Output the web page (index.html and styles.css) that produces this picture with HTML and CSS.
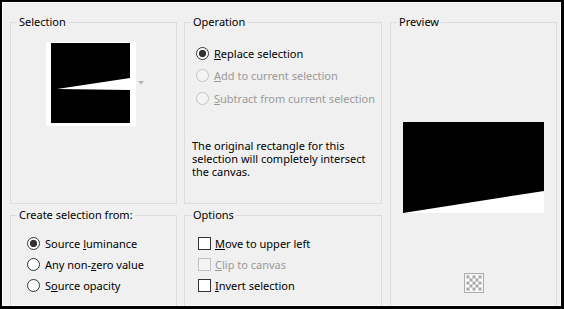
FILE: index.html
```html
<!DOCTYPE html>
<html lang="en">
<head>
    <meta charset="UTF-8">
    <title>Selection from Mask</title>
    <link rel="stylesheet" href="styles.css">
</head>
<body>

<div class="window">
    <!-- Source thumbnail -->
    <fieldset class="group group-selection">
        <legend>Selection</legend>
        <div class="thumb-row">
            <svg class="thumb" width="90" height="84" viewBox="0 0 90 84">
                <rect width="90" height="84" fill="#fff"/>
                <rect x="5" y="1" width="79" height="80" fill="#000"/>
                <polygon points="11,47 84,36 84,48" fill="#fff"/>
            </svg>
            <svg class="thumb-arrow" width="6" height="4" viewBox="0 0 6 4">
                <polygon points="0,0 6,0 3,3.5" fill="#b4b4b4"/>
            </svg>
        </div>
    </fieldset>

    <fieldset class="group group-operation">
        <legend>Operation</legend>
        <div class="options options-wide">
            <label class="option"><input type="radio" name="op" checked><span><u>R</u>eplace selection</span></label>
            <label class="option is-disabled"><input type="radio" name="op" disabled><span><u>A</u>dd to current selection</span></label>
            <label class="option is-disabled"><input type="radio" name="op" disabled><span><u>S</u>ubtract from current selection</span></label>
        </div>
        <p class="note">The original rectangle for this selection will completely intersect the canvas.</p>
    </fieldset>

    <fieldset class="group group-preview">
        <legend>Preview</legend>
        <div class="preview-body">
            <svg class="preview-img" width="141" height="91" viewBox="0 0 141 91">
                <rect width="141" height="91" fill="#000"/>
                <polygon points="0,91 141,69 141,91" fill="#fff"/>
            </svg>
            <!-- transparency toggle -->
            <svg class="checker" width="20" height="20" viewBox="0 0 20 20">
                <rect x="0.5" y="0.5" width="19" height="19" fill="#f4f4f4" stroke="#adadad"/>
                <rect x="2.5" y="2.5" width="15" height="15" fill="#fff"/>
                <g fill="#a8a8a8">
                    <rect x="2.5" y="2.5" width="3" height="3"/><rect x="8.5" y="2.5" width="3" height="3"/><rect x="14.5" y="2.5" width="3" height="3"/>
                    <rect x="5.5" y="5.5" width="3" height="3"/><rect x="11.5" y="5.5" width="3" height="3"/>
                    <rect x="2.5" y="8.5" width="3" height="3"/><rect x="8.5" y="8.5" width="3" height="3"/><rect x="14.5" y="8.5" width="3" height="3"/>
                    <rect x="5.5" y="11.5" width="3" height="3"/><rect x="11.5" y="11.5" width="3" height="3"/>
                    <rect x="2.5" y="14.5" width="3" height="3"/><rect x="8.5" y="14.5" width="3" height="3"/><rect x="14.5" y="14.5" width="3" height="3"/>
                </g>
            </svg>
        </div>
    </fieldset>

    <fieldset class="group group-source">
        <legend>Create selection from:</legend>
        <div class="options options-narrow">
            <label class="option"><input type="radio" name="src" checked><span>Source <u>l</u>uminance</span></label>
            <label class="option"><input type="radio" name="src"><span>Any non-<u>z</u>ero value</span></label>
            <label class="option"><input type="radio" name="src"><span>S<u>o</u>urce opacity</span></label>
        </div>
    </fieldset>

    <fieldset class="group group-flags">
        <legend>Options</legend>
        <div class="options options-narrow options-checks">
            <label class="option"><input type="checkbox"><span><u>M</u>ove to upper left</span></label>
            <label class="option is-disabled"><input type="checkbox" disabled><span><u>C</u>lip to canvas</span></label>
            <label class="option"><input type="checkbox"><span><u>I</u>nvert selection</span></label>
        </div>
    </fieldset>
</div>

</body>
</html>
```
FILE: styles.css
```css
body {
    margin: 0;
    font-family: "Noto Sans", "Open Sans", sans-serif;
    font-size: 11px;
    color: #000;
    background: #000;
}
.window {
    box-sizing: border-box;
    width: 564px;
    height: 309px;
    border: solid #000;
    border-width: 2px 3px 3px 2px;
    background-color: #f0f0f0;
    box-shadow: inset 1px 1px 0 #fff, inset -1px -1px 0 #fff;
    padding: 12px 0 0 8px;
    overflow: hidden;
    display: grid;
    grid-template-columns: 167px 198px 168px;
    grid-template-rows: 190px 110px;
    column-gap: 7px;
    row-gap: 3px;
}
.group {
    margin: 0;
    padding: 0;
    min-width: 0;
    border: 1px solid #dcdcdc;
}
.group legend {
    margin-left: 6px;
    padding: 0 2px;
    line-height: 16px;
}
.group-selection { grid-column: 1; grid-row: 1; }
.group-operation { grid-column: 2; grid-row: 1; }
.group-source    { grid-column: 1; grid-row: 2; }
.group-flags     { grid-column: 2; grid-row: 2; }
.group-preview {
    grid-column: 3;
    grid-row: 1 / 3;
    margin-left: 1px;
}

/* thumbnail */
.thumb-row {
    display: flex;
    align-items: center;
    padding: 12px 0 0 35px;
}
.thumb, .thumb-arrow, .preview-img, .checker {
    display: block;
}
.thumb-arrow {
    margin: 0 0 2px 2px;
}

/* radios and checkboxes */
.options {
    display: flex;
    flex-direction: column;
}
.options-wide {
    padding: 12px 0 0 11px;
}
.options-wide .option {
    height: 22.5px;
}
.options-narrow {
    padding: 9.5px 0 0 16px;
}
.options-narrow .option {
    height: 21px;
}
.options-checks {
    padding-left: 13px;
}
.option {
    display: flex;
    align-items: center;
    white-space: nowrap;
}
.option span {
    line-height: 15px;
}
.option input {
    appearance: none;
    box-sizing: border-box;
    width: 13px;
    height: 13px;
    margin: 0 5px 0 0;
    border: 1px solid #333;
    background-color: #fff;
    flex-shrink: 0;
}
.option input[type="radio"] {
    border-radius: 50%;
}
.option input[type="radio"]:checked {
    background: radial-gradient(circle, #333 0 3.4px, #fff 3.9px);
}
.options-checks .option input {
    margin-right: 4px;
}
.option.is-disabled {
    color: #9a9a9a;
}
.option.is-disabled input {
    border-color: #c2c2c2;
    background-color: #f4f4f4;
}

.note {
    margin: 29px 0 0 7px;
    max-width: 180px;
    line-height: 13px;
}

/* preview */
.preview-body {
    display: flex;
    flex-direction: column;
    align-items: center;
    padding-top: 92px;
}
.checker {
    margin-top: 60px;
}
```
